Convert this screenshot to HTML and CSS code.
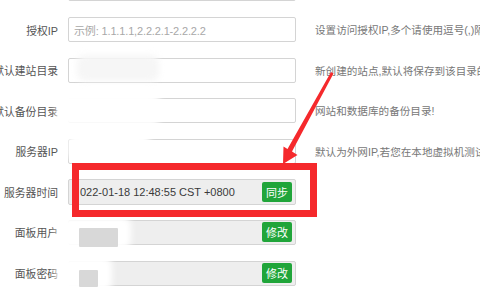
FILE: index.html
```html
<!DOCTYPE html>
<html>
<head>
<meta charset="utf-8">
<link rel="stylesheet" href="styles.css">
</head>
<body>
<div class="page">
  <div class="form">
    <div class="row">
      <div class="label">面板端口</div>
      <div class="field"></div>
      <div class="tip">建议端口范围8888 - 65535</div>
    </div>
    <div class="row">
      <div class="label">授权IP</div>
      <div class="field"><span class="placeholder">示例: 1.1.1.1,2.2.2.1-2.2.2.2</span></div>
      <div class="tip">设置访问授权IP,多个请使用逗号(,)隔开</div>
    </div>
    <div class="row">
      <div class="label">默认建站目录</div>
      <div class="field"></div>
      <div class="tip">新创建的站点,默认将保存到该目录的下级目录</div>
    </div>
    <div class="row">
      <div class="label">默认备份目录</div>
      <div class="field"></div>
      <div class="tip">网站和数据库的备份目录!</div>
    </div>
    <div class="row">
      <div class="label">服务器IP</div>
      <div class="field"></div>
      <div class="tip">默认为外网IP,若您在本地虚拟机测试</div>
    </div>
    <div class="row">
      <div class="label">服务器时间</div>
      <div class="field disabled tall">
        <span class="value">022-01-18 12:48:55 CST +0800</span>
        <button class="btn">同步</button>
      </div>
      <div class="tip"></div>
    </div>
    <div class="row">
      <div class="label">面板用户</div>
      <div class="field disabled">
        <span class="value"></span>
        <button class="btn">修改</button>
      </div>
      <div class="tip"></div>
    </div>
    <div class="row">
      <div class="label">面板密码</div>
      <div class="field disabled">
        <span class="value"></span>
        <button class="btn">修改</button>
      </div>
      <div class="tip"></div>
    </div>
  </div>

  <!-- blurred smudges over private values -->
  <div class="smudge soft" style="left:77px;top:55px;width:82px;height:26px"></div>
  <div class="smudge" style="left:56px;top:93px;width:104px;height:33px"></div>
  <div class="smudge" style="left:68px;top:133px;width:82px;height:28px"></div>
  <div class="smudge" style="left:57px;top:217px;width:74px;height:32px"></div>
  <div class="smudge grey" style="left:79px;top:228px;width:39px;height:19px"></div>
  <div class="smudge" style="left:56px;top:257px;width:56px;height:34px"></div>
  <div class="smudge grey" style="left:79px;top:270px;width:19px;height:17px"></div>
  <div class="smudge" style="left:70px;top:294px;width:76px;height:12px"></div>

  <div class="highlight"></div>
  <svg class="arrow" width="480" height="300" viewBox="0 0 480 300">
    <polygon fill="#f5292c" points="331,72 333.5,73.5 292,151.5 297.5,155 283,164 283.5,146.5 287.5,149"/>
  </svg>
</div>
</body>
</html>
```

FILE: styles.css
```css
* {box-sizing: border-box;}
body {
  margin: 0;
  background: #fff;
  font-family: "Liberation Sans", "Noto Sans CJK SC", sans-serif;
}

.page {
  position: relative;
  width: 480px;
  height: 300px;
  overflow: hidden;
}

.form {
  display: flex;
  flex-direction: column;
  gap: 15.6px;
  margin-top: -23.6px;
  margin-left: -22px;
}

.row {
  display: flex;
  align-items: center;
  height: 25px;
}

.label {
  flex: 0 0 80px;
  margin-right: 10px;
  text-align: right;
  font-size: 10.8px;
  color: #555;
  white-space: nowrap;
}

.field {
  flex: 0 0 228px;
  display: flex;
  align-items: center;
  justify-content: space-between;
  height: 25px;
  padding: 0 3px 0 5px;
  border: 1px solid #d4d4d4;
  border-radius: 2px;
  background: #fff;
}
.field.tall {height: 26px;}
.field.disabled {background: #eee;}

.placeholder {
  font-size: 11px;
  color: #a8a8a8;
  letter-spacing: -0.15px;
}

.value {
  font-size: 11px;
  color: #3a3a3a;
  margin-left: 6px;
  white-space: nowrap;
}

.btn {
  width: 30px;
  height: 20px;
  padding: 0;
  border: 0;
  border-radius: 2px;
  background: #20a53a;
  color: #fff;
  font-family: inherit;
  font-size: 11px;
}

.tip {
  margin-left: 19px;
  font-size: 10.6px;
  color: #777;
  white-space: nowrap;
}

.smudge {
  position: absolute;
  background: #fff;
  border-radius: 8px;
  filter: blur(3px);
}
.smudge.soft {background: #f6f6f6; filter: blur(3px);}
.smudge.grey {background: #d8d8d8; border-radius: 1px; filter: blur(0.6px);}

.highlight {
  position: absolute;
  left: 72px;
  top: 163px;
  width: 245px;
  height: 54px;
  border: 7px solid #f5292c;
}

.arrow {
  position: absolute;
  left: 0;
  top: 0;
}
```
